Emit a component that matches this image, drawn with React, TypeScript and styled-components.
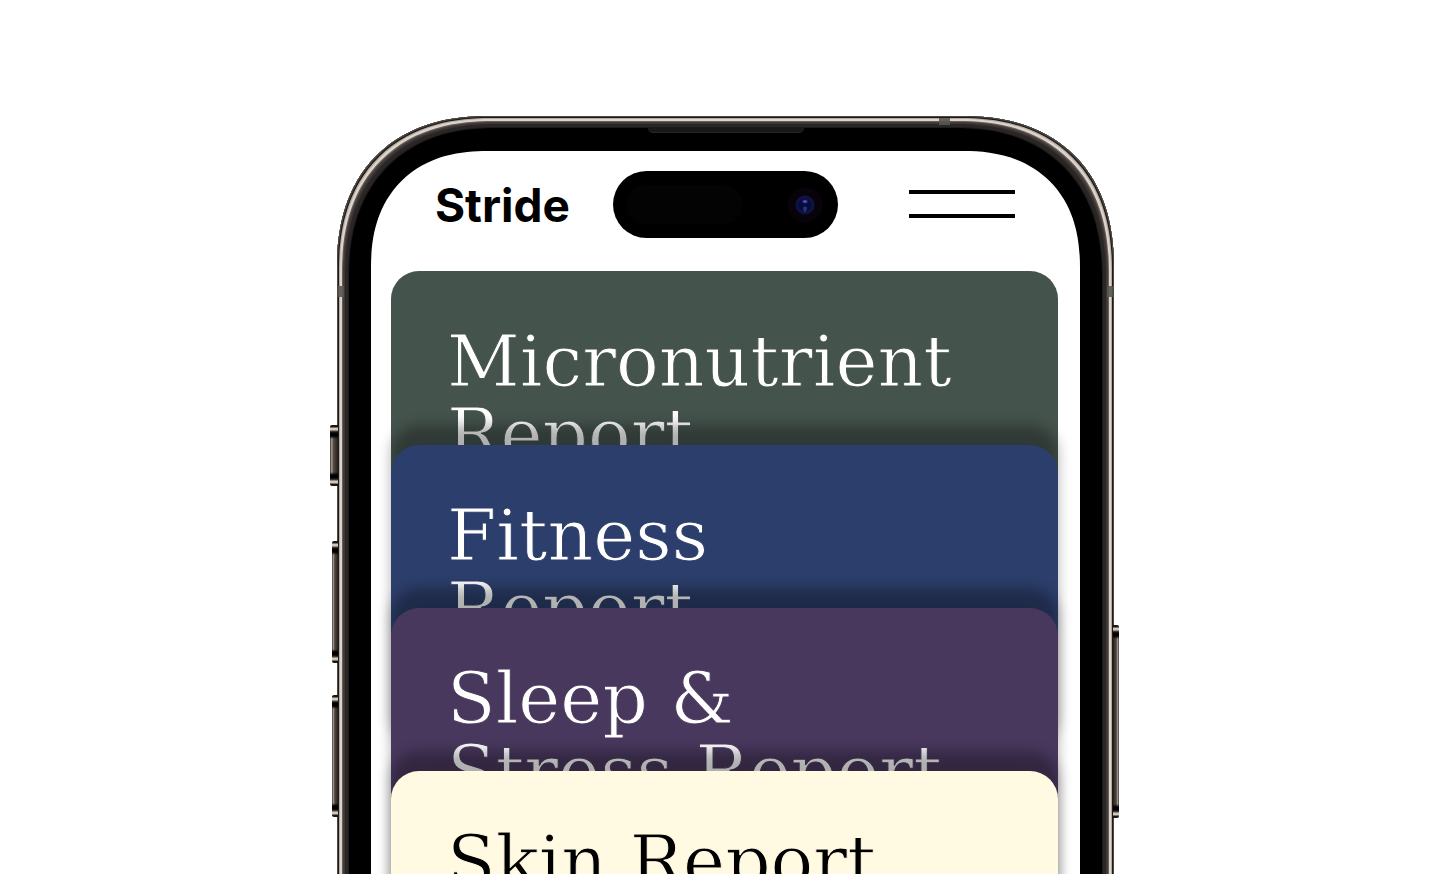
import React from "react";
import styled, { createGlobalStyle, css } from "styled-components";

const GlobalStyle = createGlobalStyle`
  *, *::before, *::after { box-sizing: border-box; }
  body { margin: 0; background: #fff; overflow: hidden; }
`;

const squircle = css`
  corner-shape: superellipse(1.2);
`;

const Stage = styled.main`
  height: calc(100vh - 1px);
  overflow: hidden;
  padding: 116px 0 0 6px;
`;

const Phone = styled.div`
  position: relative;
  width: 100%;
  max-width: 777px;
  margin: 0 auto;
`;

const Bezel = styled.div`
  ${squircle}
  min-height: 1600px;
  padding: 35px 34px;
  border-radius: 152px;
  background: #000;
  box-shadow:
    inset 0 0 0 1px #4a4744,
    inset 0 0 0 2px #1d1a18,
    inset 0 0 0 3px #b5aaa0,
    inset 0 0 0 5px #dcd4cc,
    inset 0 0 1px 6px #6b625d,
    inset 0 0 1px 8px #3f3937,
    inset 0 0 0 11px #2a2625,
    inset 0 0 0 12px #1c1c1c;
`;

const Screen = styled.div`
  ${squircle}
  min-height: 1530px;
  padding: 20px 22px 0 20px;
  border-radius: 116px;
  background: #fff;
`;

const SideButton = styled.span<{ $side: "left" | "right"; $top: number; $length: number; $depth: number }>`
  position: absolute;
  ${(p) => p.$side}: ${(p) => -p.$depth}px;
  top: ${(p) => p.$top}px;
  width: ${(p) => p.$depth + 1}px;
  height: ${(p) => p.$length}px;
  border-radius: ${(p) => (p.$side === "left" ? "2px 0 0 2px" : "0 2px 2px 0")};
  background:
    linear-gradient(#1a1715 0 2px, #d2c8bc 3px 5px, #51483f 6px, #000 8px 11px, transparent 14px calc(100% - 14px), #000 calc(100% - 11px) calc(100% - 8px), #51483f calc(100% - 6px), #d2c8bc calc(100% - 5px) calc(100% - 3px), #1a1715 calc(100% - 2px)),
    linear-gradient(to ${(p) => p.$side}, #25201e, #51483f 55%, #a59a91 78%, #39332f);
`;

const Antenna = styled.span<{ $edge: "top" | "left" | "right" }>`
  position: absolute;
  background: rgba(88, 86, 84, 0.9);
  ${(p) =>
    p.$edge === "top"
      ? "top: 2px; right: 164px; width: 11px; height: 7px;"
      : `top: 170px; ${p.$edge}: 1px; width: 6px; height: 11px;`}
`;

const Speaker = styled.span`
  position: absolute;
  top: 12px;
  left: 50%;
  width: 156px;
  height: 5px;
  margin-left: -78px;
  border-radius: 0 0 5px 5px;
  background: #191919;
  border-bottom: 1px solid #282828;
`;

const Header = styled.header`
  display: grid;
  grid-template-columns: 1fr auto 1fr;
  align-items: center;
  padding: 0 43px 0 44px;
  margin-bottom: 33px;
`;

const Brand = styled.a`
  color: #000;
  font: 700 46px/56px Inter, "Liberation Sans", sans-serif;
  text-decoration: none;
`;

const Island = styled.div`
  display: flex;
  align-items: center;
  justify-content: space-between;
  width: 225px;
  height: 67px;
  padding: 0 15px 0 13px;
  border-radius: 34px;
  background: #000;
`;

const Sensor = styled.span`
  width: 117px;
  height: 39px;
  border-radius: 20px;
  background: #030303;
`;

const MenuButton = styled.button`
  justify-self: end;
  display: flex;
  flex-direction: column;
  gap: 20px;
  width: 106px;
  padding: 0 0 2px;
  border: 0;
  background: none;
`;

const Bar = styled.span`
  height: 4px;
  background: #000;
`;

const Stack = styled.section`
  display: flex;
  flex-direction: column;
`;

const Card = styled.article<{ $color: string; $ink?: string; $overlap?: number }>`
  position: relative;
  height: 320px;
  margin-top: ${(p) => -(p.$overlap ?? 0)}px;
  padding: 54px 56px 0;
  border-radius: 28px;
  background: ${(p) => p.$color};
  color: ${(p) => p.$ink ?? "#fff"};
  box-shadow: ${(p) => (p.$overlap ? "0 -20px 13px rgba(0, 0, 0, 0.31)" : "none")};
  -webkit-text-stroke: 1px ${(p) => p.$color};
`;

const Title = styled.h2`
  margin: 0;
  font: 400 71px/73px "DejaVu Serif", serif;
  white-space: pre-line;
`;

const reports = [
  { title: "Micronutrient\nReport", color: "#45534d" },
  { title: "Fitness\nReport", color: "#2c3e6b", overlap: 146 },
  { title: "Sleep &\nStress Report", color: "#49385e", overlap: 157 },
  { title: "Skin Report", color: "#fffae1", ink: "#000", overlap: 157 },
];

function Camera() {
  return (
    <svg width="36" height="36" viewBox="0 0 36 36" aria-hidden="true">
      <defs>
        <radialGradient id="lens">
          <stop offset="0" stopColor="#080b4c" />
          <stop offset=".55" stopColor="#07083c" />
          <stop offset=".8" stopColor="#11164a" />
          <stop offset="1" stopColor="#09071b" />
        </radialGradient>
        <radialGradient id="glint">
          <stop offset="0" stopColor="#8585d8" />
          <stop offset="1" stopColor="#252895" stopOpacity="0" />
        </radialGradient>
      </defs>
      <circle cx="18" cy="18" r="17.5" fill="#08030a" />
      <circle cx="18" cy="18" r="10" fill="url(#lens)" />
      <ellipse cx="18" cy="14.5" rx="4" ry="2.6" fill="url(#glint)" />
      <circle cx="18" cy="21.5" r="2" fill="#10465b" />
      <circle cx="18" cy="23.5" r="1.4" fill="#41238a" />
    </svg>
  );
}

export default function App() {
  return (
    <>
      <GlobalStyle />
      <Stage>
        <Phone>
          <SideButton $side="left" $top={309} $length={61} $depth={7} />
          <SideButton $side="left" $top={425} $length={122} $depth={5} />
          <SideButton $side="left" $top={579} $length={122} $depth={5} />
          <SideButton $side="right" $top={509} $length={193} $depth={5} />
          <Bezel>
            <Screen>
              <Header>
                <Brand href="#">Stride</Brand>
                <Island>
                  <Sensor />
                  <Camera />
                </Island>
                <MenuButton aria-label="Menu">
                  <Bar />
                  <Bar />
                </MenuButton>
              </Header>
              <Stack>
                {reports.map((r) => (
                  <Card key={r.title} $color={r.color} $ink={r.ink} $overlap={r.overlap}>
                    <Title>{r.title}</Title>
                  </Card>
                ))}
              </Stack>
            </Screen>
          </Bezel>
          <Speaker />
          <Antenna $edge="top" />
          <Antenna $edge="left" />
          <Antenna $edge="right" />
        </Phone>
      </Stage>
    </>
  );
}
